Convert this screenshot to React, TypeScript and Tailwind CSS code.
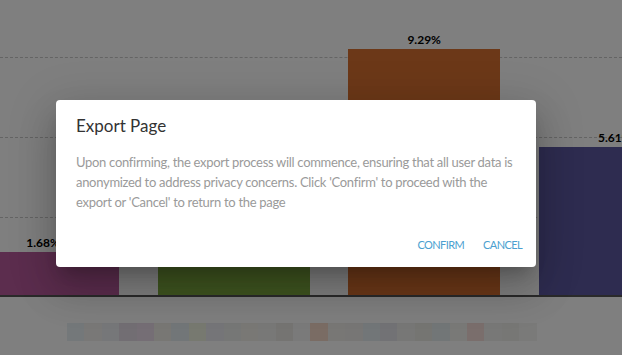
const bars = [
  { label: "1.68%", height: 43, color: "bg-[#b85a9c]" },
  { label: "", height: 33, color: "bg-[#7eaa40]" },
  { label: "9.29%", height: 246, color: "bg-[#d87030]" },
  { label: "5.61%", height: 148, color: "bg-[#5c58a0]" },
];

const legend = [
  "#e8f0f4", "#f2f0ee", "#eceef2", "#e4dce6", "#eadcea", "#f0eee8", "#e4ecf0", "#eef2e0",
  "#eaeaf0", "#eceeec", "#f2f0ea", "#f0f0ee", "#eae8e4", "#f4f4f4", "#f4d8c8", "#f0eeea",
  "#eeecea", "#e4ecf0", "#e4e4ea", "#eeeeec", "#eaeae4", "#e4ecee", "#f2f2ee", "#f4dcd8",
  "#f0f0ee", "#eeeeea", "#f4f4f2",
];

const Chart = () => {
  return (
    <div className="flex h-[355px] w-[622px] flex-col overflow-hidden bg-white">
      <div className="relative h-[297px] border-b-2 border-[#555]">
        <div className="absolute inset-x-0 top-[57px] border-t border-dashed border-[#c8c8c8]" />
        <div className="absolute inset-x-0 top-[137px] border-t border-dashed border-[#c8c8c8]" />
        <div className="absolute inset-x-0 top-[217px] border-t border-dashed border-[#c8c8c8]" />
        <div className="relative ml-[-33px] flex h-full items-end gap-[38.6px]">
          {bars.map((b, i) => (
            <div key={i} className={`relative w-[152px] shrink-0 ${b.color}`} style={{ height: b.height }}>
              {b.label && (
                <span className="absolute -top-[16px] inset-x-0 whitespace-nowrap text-center text-[12px] font-bold leading-[14px] text-black">
                  {b.label}
                </span>
              )}
            </div>
          ))}
        </div>
      </div>
      <div className="ml-[67px] mt-[26px] flex h-[18px]">
        {legend.map((c, i) => (
          <div key={i} className="h-full w-[17.4px]" style={{ background: c }} />
        ))}
      </div>
    </div>
  );
};

const App = () => {
  return (
    <div className="relative h-[355px] w-[622px] overflow-hidden font-['Lato',sans-serif]">
      <Chart />
      <div className="absolute inset-0 flex items-start bg-black/50 pl-[56px] pt-[100px]">
        <div className="flex h-[167px] w-[480px] flex-col rounded bg-white shadow-[0_11px_15px_-7px_rgba(0,0,0,0.2),0_24px_38px_3px_rgba(0,0,0,0.14),0_9px_46px_8px_rgba(0,0,0,0.12)]">
          <h2 className="px-5 pt-[14px] text-[17px] leading-[24px] text-[#333]">Export Page</h2>
          <div className="mt-[14px] flex flex-col whitespace-nowrap px-5 text-[13px] leading-[20px] tracking-[-0.3px] text-[#9a9a9a]">
            <span>Upon confirming, the export process will commence, ensuring that all user data is</span>
            <span>anonymized to address privacy concerns. Click 'Confirm' to proceed with the</span>
            <span>export or 'Cancel' to return to the page</span>
          </div>
          <div className="mt-auto flex justify-end gap-[3px] px-[6px] pb-[14px]">
            <button className="px-2 text-[11px] leading-[16px] tracking-[-0.6px] text-[#4b9fd0]">CONFIRM</button>
            <button className="px-2 text-[11px] leading-[16px] tracking-[-0.6px] text-[#4b9fd0]">CANCEL</button>
          </div>
        </div>
      </div>
    </div>
  );
};

export default App;
